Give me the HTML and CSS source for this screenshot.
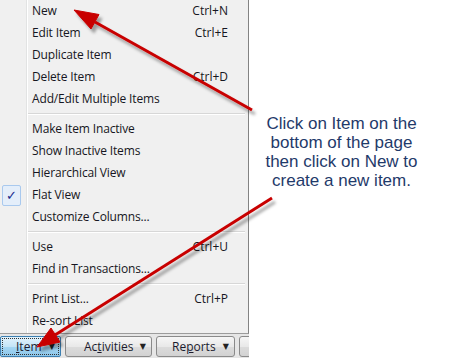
FILE: index.html
```html
<!DOCTYPE html>
<html lang="en">
<head>
    <meta charset="UTF-8">
    <title>Item Menu</title>
    <link rel="stylesheet" href="styles.css">
</head>
<body>
    <div class="page">
        <!-- left side: context menu + list toolbar -->
        <div class="window">
            <ul class="menu">
                <li class="item"><span class="icon"></span><span class="label">New</span><span class="key">Ctrl+N</span></li>
                <li class="item"><span class="icon"></span><span class="label">Edit Item</span><span class="key">Ctrl+E</span></li>
                <li class="item"><span class="icon"></span><span class="label">Duplicate Item</span></li>
                <li class="item"><span class="icon"></span><span class="label">Delete Item</span><span class="key">Ctrl+D</span></li>
                <li class="item"><span class="icon"></span><span class="label">Add/Edit Multiple Items</span></li>
                <li class="sep"></li>
                <li class="item"><span class="icon"></span><span class="label">Make Item Inactive</span></li>
                <li class="item"><span class="icon"></span><span class="label">Show Inactive Items</span></li>
                <li class="item"><span class="icon"></span><span class="label">Hierarchical View</span></li>
                <li class="item"><span class="icon checked">&#10003;</span><span class="label">Flat View</span></li>
                <li class="item"><span class="icon"></span><span class="label">Customize Columns...</span></li>
                <li class="sep"></li>
                <li class="item"><span class="icon"></span><span class="label">Use</span><span class="key">Ctrl+U</span></li>
                <li class="item"><span class="icon"></span><span class="label">Find in Transactions...</span></li>
                <li class="sep"></li>
                <li class="item"><span class="icon"></span><span class="label">Print List...</span><span class="key">Ctrl+P</span></li>
                <li class="item"><span class="icon"></span><span class="label">Re-sort List</span></li>
            </ul>
            <div class="toolbar">
                <div class="tb-btn pressed"><span class="tb-label"><u>I</u>tem</span><span class="caret">&#9660;</span></div>
                <div class="tb-btn wide"><span class="tb-label">Ac<u>t</u>ivities</span><span class="caret">&#9660;</span></div>
                <div class="tb-btn"><span class="tb-label">Re<u>p</u>orts</span><span class="caret">&#9660;</span></div>
                <div class="tb-btn"><span class="tb-label">&nbsp;</span></div>
            </div>
        </div>

        <!-- right side: instruction -->
        <div class="note">
            <p>Click on Item on the<br>bottom of the page<br>then click on New to<br>create a new item.</p>
        </div>

        <!-- red arrows drawn over the screenshot -->
        <svg class="arrows" width="462" height="358" viewBox="0 0 462 358">
            <defs>
                <filter id="shadow" x="-10%" y="-10%" width="130%" height="130%">
                    <feDropShadow dx="3" dy="4" stdDeviation="1.6" flood-color="#000" flood-opacity="0.35"/>
                </filter>
            </defs>
            <g filter="url(#shadow)" fill="#c80000" stroke="#c80000">
                <line x1="252" y1="110" x2="95" y2="22" stroke-width="3"/>
                <polygon points="74,10 99,14.5 91,29" stroke-width="1"/>
                <line x1="272" y1="198" x2="55" y2="335" stroke-width="3"/>
                <polygon points="37,347 51,328 60,342" stroke-width="1"/>
            </g>
        </svg>
    </div>
</body>
</html>
```

FILE: styles.css
```css
body {
    margin: 0;
    padding: 0;
    background-color: #fff;
    font-family: "Open Sans", "Noto Sans", sans-serif;
    font-size: 12px;
    color: #161622;
}
.page {
    position: relative;
    width: 462px;
    height: 358px;
    display: flex;
    overflow: hidden;
}
.window {
    width: 249px;
    display: flex;
    flex-direction: column;
}

/* menu */
.menu {
    flex: 1;
    list-style: none;
    margin: 0;
    padding: 0;
    border-right: 1px solid #838383;
    border-bottom: 1px solid #9c9c9c;
    /* icon gutter with its double line */
    background: linear-gradient(to right, #f0f0f0 26px, #e2e3e3 26px, #e2e3e3 27px, #fff 27px, #fff 28px, #f0f0f0 28px);
}
.item {
    height: 22px;
    box-sizing: border-box;
    display: flex;
    align-items: center;
    padding: 0 20px 2px 2px;
}
.icon {
    width: 19px;
    height: 21px;
    margin-right: 11px;
    box-sizing: border-box;
    display: flex;
    align-items: center;
    justify-content: center;
}
.icon.checked {
    margin-top: 2px;
    border: 1px solid #a9c9ee;
    border-radius: 2px;
    background-color: #e4eefa;
    color: #1a2a8c;
    font-family: "DejaVu Sans", sans-serif;
    font-size: 13px;
    font-weight: bold;
}
.label {
    flex: 1;
    letter-spacing: -0.15px;
}
.key {
    text-align: right;
}
.sep {
    height: 8px;
    display: flex;
    align-items: center;
    margin: 0 3px 0 28px;
}
.sep::after {
    content: "";
    flex: 1;
    height: 1px;
    background-color: #d7d7d7;
    border-bottom: 1px solid #fff;
}

/* toolbar under the list */
.toolbar {
    height: 24px;
    display: flex;
    gap: 4px;
    padding-top: 2px;
    box-sizing: border-box;
    background-color: #e6e6e6;
    overflow: hidden;
}
.tb-btn {
    flex: none;
    width: 79px;
    height: 21px;
    box-sizing: border-box;
    display: flex;
    align-items: center;
    padding: 0 5px 0 15px;
    border: 1px solid #8a8a8a;
    border-radius: 3px;
    background: linear-gradient(#f6f6f6, #e9e9e9 50%, #dcdcdc 50%, #d2d2d2);
    color: #1b1b2e;
}
.tb-btn.wide {
    width: 87px;
    padding-left: 18px;
}
.tb-btn.pressed {
    width: 61px;
    border-color: #3c7fb1;
    border-radius: 2px;
    background: linear-gradient(#e3f3fc, #c4e5f7 50%, #a6d7f3 50%, #8cc6ea);
    outline: 1px dotted #333;
    outline-offset: -3px;
}
.tb-label {
    flex: 1;
}
.caret {
    font-family: "DejaVu Sans", sans-serif;
    font-size: 8px;
    color: #222;
}

/* instruction text */
.note {
    flex: 1;
    padding: 114px 28px 0 0;
    text-align: center;
}
.note p {
    margin: 0;
    font-family: "Liberation Sans", Arial, sans-serif;
    font-size: 17px;
    line-height: 19px;
    color: #1f3a6a;
    white-space: nowrap;
}

/* overlay arrows */
.arrows {
    position: absolute;
    top: 0;
    left: 0;
    pointer-events: none;
}
```
